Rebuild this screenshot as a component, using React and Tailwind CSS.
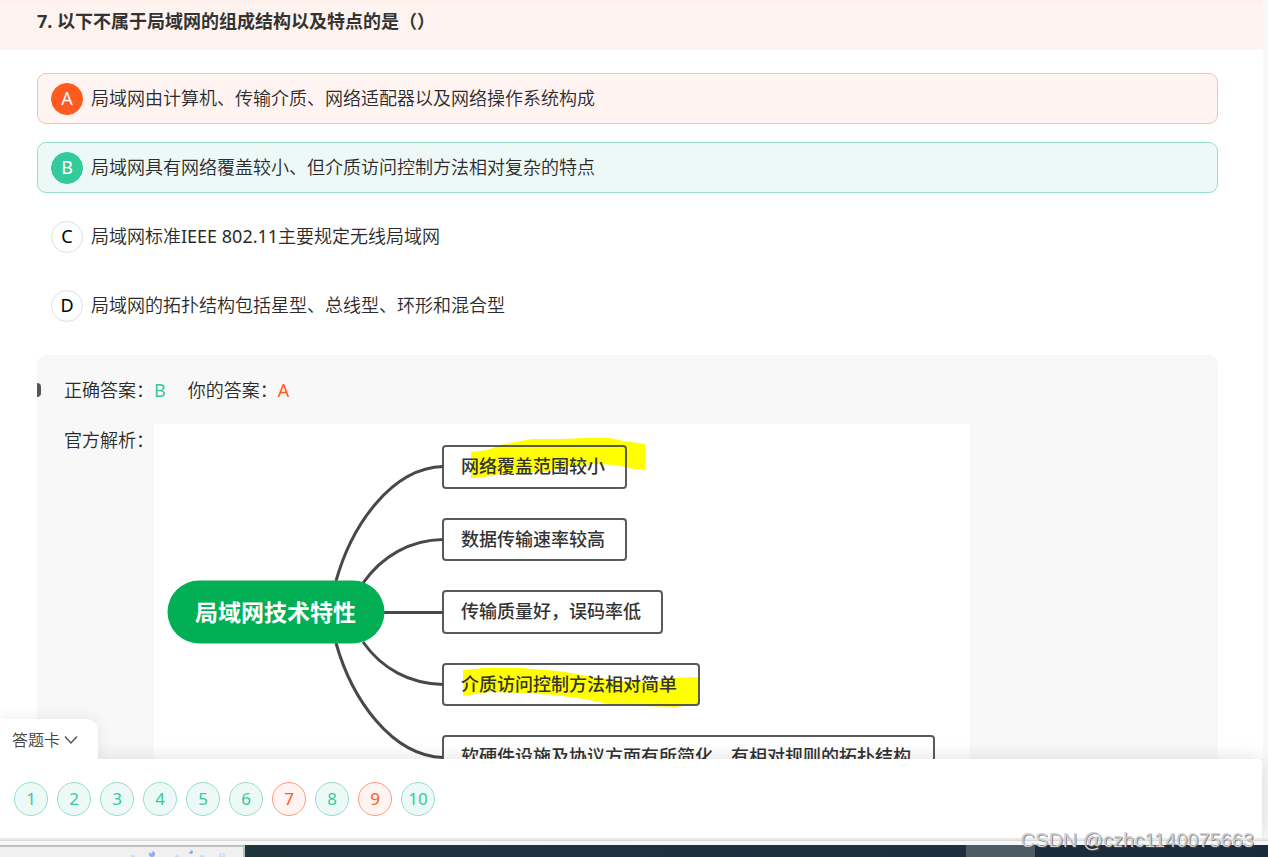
import React from "react";

const OPTIONS = [
  { key: "A", text: "局域网由计算机、传输介质、网络适配器以及网络操作系统构成", state: "wrong" },
  { key: "B", text: "局域网具有网络覆盖较小、但介质访问控制方法相对复杂的特点", state: "right" },
  {
    key: "C",
    text: (
      <>
        局域网标准<span className="font-normal">IEEE 802.11</span>主要规定无线局域网
      </>
    ),
    state: "plain",
  },
  { key: "D", text: "局域网的拓扑结构包括星型、总线型、环形和混合型", state: "plain" },
];

const BOX_STYLE = {
  wrong: "border-[#fdbfa9] bg-[#fff4f1]",
  right: "border-[#96dfc8] bg-[#edf9f6]",
  plain: "border-transparent",
};

const BADGE_STYLE = {
  wrong: "border-[#ff5a1f] bg-[#ff5a1f] text-white",
  right: "border-[#34cb9a] bg-[#34cb9a] text-white",
  plain: "border-[#dfdfdf] bg-white text-black",
};

const ANSWERS = [1, 2, 3, 4, 5, 6, 7, 8, 9, 10];
const WRONG = [7, 9];

function Option({ option }) {
  return (
    <label
      className={`flex h-[51px] cursor-pointer items-center gap-2 rounded-[9px] border pl-[13px] ${BOX_STYLE[option.state]}`}
    >
      <input
        type="radio"
        name="answer"
        value={option.key}
        defaultChecked={option.key === "A"}
        className="sr-only"
      />
      <span
        className={`flex size-8 items-center justify-center rounded-full border pb-px leading-none font-normal ${BADGE_STYLE[option.state]}`}
      >
        {option.key}
      </span>
      <span className="pb-px">{option.text}</span>
    </label>
  );
}

const TOPICS = [
  { y: 22, w: 183, h: 42, text: "网络覆盖范围较小" },
  { y: 95, w: 183, h: 41, text: "数据传输速率较高" },
  { y: 167, w: 219, h: 42, text: "传输质量好，误码率低" },
  { y: 240, w: 256, h: 41, text: "介质访问控制方法相对简单" },
  { y: 312, w: 491, h: 42, text: "软硬件设施及协议方面有所简化，有相对规则的拓扑结构" },
];

function MindMap() {
  return (
    <svg
      width="816"
      height="376"
      viewBox="0 0 816 376"
      role="img"
      aria-label="局域网技术特性"
      className="shrink-0 bg-white"
    >
      <g fill="#ffff00">
        <path d="M317 28 L333 26 L350 20 L378 15 L410 15 L430 14 L455 14 L470 17 L491 20 L491 46 L480 45 L462 41 L440 40 L415 42 L390 48 L352 49 L330 53 L317 54 Z" />
        <path d="M309 246 L330 244 L366 244 L405 247 L440 253 L475 258 L500 258 L520 254 L545 253 L545 280 L520 283 L490 282 L455 280 L430 275 L400 271 L370 269 L335 268 L309 272 Z" />
      </g>
      <g fill="none" stroke="#484848" strokeWidth="3">
        <path d="M182 157 C198 100 238 44 289 42.500" />
        <path d="M209 159 C228 132 256 116 289 115.500" />
        <path d="M229 188.500 H289" />
        <path d="M209 218 C228 245 256 260 289 260.500" />
        <path d="M182 219 C198 276 238 332 289 333.500" />
      </g>
      <rect x="13.500" y="156.500" width="217" height="63" rx="31.500" fill="#02af54" />
      <text x="41" y="197" fontSize="23" fontWeight="700" fill="#fff">
        局域网技术特性
      </text>
      {TOPICS.map((t) => (
        <g key={t.text}>
          <rect
            x="289"
            y={t.y}
            width={t.w}
            height={t.h}
            rx="3"
            fill="none"
            stroke="#484848"
            strokeOpacity="0.9"
            strokeWidth="2"
          />
          <text x="307" y={t.y + 27} fontSize="18" fontWeight="500" fill="#333">
            {t.text}
          </text>
        </g>
      ))}
    </svg>
  );
}

function AnswerCard() {
  return (
    <section className="relative z-10 mr-[6px] rounded-tr-[5px] bg-white shadow-[0_0_20px_rgba(0,0,0,0.12)]">
      <button
        type="button"
        className="absolute bottom-full left-0 flex h-10 w-[98px] items-center gap-1 rounded-tr-[12px] bg-white pt-[2px] pl-3 text-base text-[#444] shadow-[0_0_16px_rgba(0,0,0,0.08)] [clip-path:inset(-20px_-20px_0_0)]"
      >
        <span className="font-[350]">答题卡</span>
        <svg width="14" height="10" viewBox="0 0 14 10" fill="none" stroke="#555" strokeWidth="1.500">
          <path d="M1 1.500 L7 8 L13 1.500" />
        </svg>
      </button>
      <nav className="relative flex gap-[9px] rounded-tr-[5px] bg-white pt-[23px] pb-[22px] pl-[14px]">
        {ANSWERS.map((n) => (
          <button
            type="button"
            key={n}
            className={`flex size-[34px] items-center justify-center rounded-full border pb-px text-[17px] leading-none ${
              WRONG.includes(n)
                ? "border-[#ff9c7b] bg-[#fff4f1] text-[#ff5a1f]"
                : "border-[#96dfc8] bg-[#edf9f6] text-[#34cb9a]"
            }`}
          >
            {n}
          </button>
        ))}
      </nav>
    </section>
  );
}

function Taskbar() {
  return (
    <footer className="relative z-20">
      <div className="h-[7px] border-t-2 border-[#e9e9e9] bg-[#f7f7f7]">
        <div className="h-px bg-[#d9d9d9]" />
      </div>
      <div className="flex h-3 bg-linear-to-r from-[#20383f] to-[#1c2a3d]">
        <div className="w-[245px] border-t-2 border-r-2 border-[#bfbfbf] bg-[#f0f0f0]">
          <svg width="243" height="10" viewBox="0 0 243 10">
            <g fill="#c5dcfb">
              <circle cx="133" cy="10" r="2" />
              <circle cx="177" cy="10" r="2" />
              <circle cx="202" cy="11" r="3" />
              <circle cx="222" cy="9" r="3" />
            </g>
            <g fill="#8fa8f8">
              <circle cx="152" cy="7" r="3" />
              <circle cx="191" cy="5" r="2" />
            </g>
            <g fill="#e4eeff">
              <circle cx="151" cy="5" r="1.500" />
              <circle cx="190" cy="4" r="1" />
              <circle cx="222" cy="8" r="1.500" />
            </g>
          </svg>
        </div>
        <div className="mr-[233px] ml-auto w-[69px] bg-[#4d5b64]" />
      </div>
      <span className="absolute right-[14px] bottom-[5px] font-['Liberation_Sans',sans-serif] text-xl leading-6 text-[#cfcfcf] [text-shadow:1px_1px_0_rgba(80,80,80,0.65)]">
        CSDN @czhc1140075663
      </span>
    </footer>
  );
}

export default function App() {
  return (
    <div
      lang="zh-CN"
      className="flex h-screen flex-col overflow-hidden bg-[#f8f8f9] font-['Noto_Sans','Noto_Sans_CJK_SC',sans-serif] text-lg text-[#333]"
    >
      <main className="mr-[5px] min-h-0 flex-1 overflow-hidden bg-white font-[350] text-[#2b2b2b]">
        <h1 className="h-[50px] border-t-3 border-[#fceeeb] bg-[#fff3ef] pl-[37px] text-lg leading-9 font-bold text-[#333]">
          7. 以下不属于局域网的组成结构以及特点的是（）
        </h1>
        <div className="pt-[23px] pr-[45px] pl-[37px]">
          <div role="radiogroup" className="flex flex-col gap-[18px]">
            {OPTIONS.map((o) => (
              <Option key={o.key} option={o} />
            ))}
          </div>
          <section className="relative mt-6 flex flex-col gap-[18px] rounded-[9px] bg-[#f8f8f8] pt-[19px] pb-6 pl-[27px] leading-8">
            <span className="absolute top-[28px] left-0 h-[14px] w-1 rounded-r-[4px] bg-[#555]" />
            <div className="flex gap-[22px]">
              <p>
                正确答案：<span className="font-normal text-[#34cb9a]">B</span>
              </p>
              <p>
                你的答案：<span className="font-normal text-[#ff5a1f]">A</span>
              </p>
            </div>
            <div className="flex">
              <p className="shrink-0">官方解析：</p>
              <MindMap />
            </div>
          </section>
        </div>
      </main>
      <AnswerCard />
      <Taskbar />
    </div>
  );
}
